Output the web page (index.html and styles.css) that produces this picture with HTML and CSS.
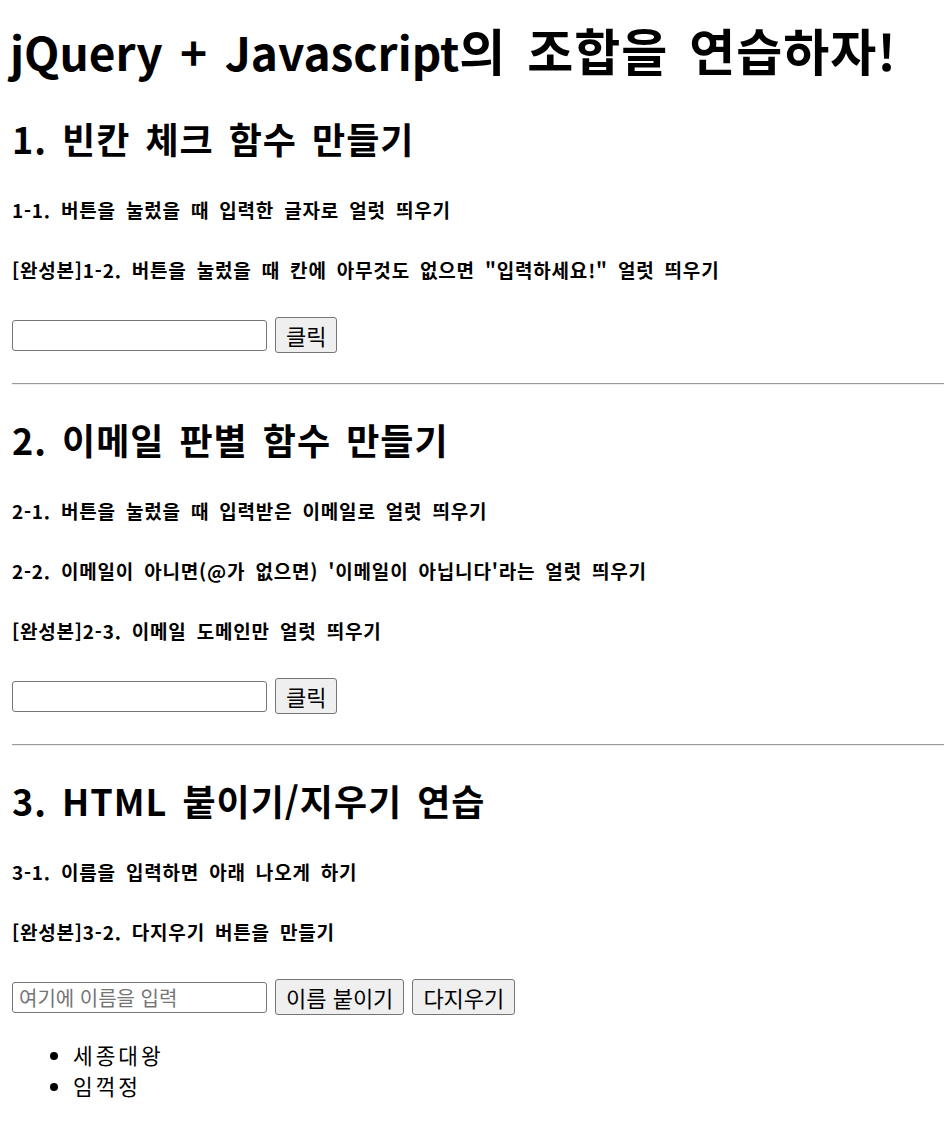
FILE: index.html
```html
<!DOCTYPE html>
<html lang="ko">
<head>
<meta charset="utf-8">
<title>jQuery + Javascript</title>
<link rel="stylesheet" href="styles.css">
</head>
<body>
<h1 class="title"><span class="en" lang="en">jQuery + Javascript</span>의 조합을 연습하자!</h1>

<section class="part">
  <h2 class="part-title">1. 빈칸 체크 함수 만들기</h2>
  <h4 class="task">1-1. 버튼을 눌렀을 때 입력한 글자로 얼럿 띄우기</h4>
  <h4 class="task">[완성본]1-2. 버튼을 눌렀을 때 칸에 아무것도 없으면 "입력하세요!" 얼럿 띄우기</h4>
  <div class="row">
    <input class="field" type="text">
    <button class="btn">클릭</button>
  </div>
</section>
<hr class="divider">

<section class="part">
  <h2 class="part-title">2. 이메일 판별 함수 만들기</h2>
  <h4 class="task">2-1. 버튼을 눌렀을 때 입력받은 이메일로 얼럿 띄우기</h4>
  <h4 class="task">2-2. 이메일이 아니면(@가 없으면) '이메일이 아닙니다'라는 얼럿 띄우기</h4>
  <h4 class="task">[완성본]2-3. 이메일 도메인만 얼럿 띄우기</h4>
  <div class="row">
    <input class="field" type="text">
    <button class="btn">클릭</button>
  </div>
</section>
<hr class="divider">

<section class="part">
  <h2 class="part-title">3. HTML 붙이기/지우기 연습</h2>
  <h4 class="task">3-1. 이름을 입력하면 아래 나오게 하기</h4>
  <h4 class="task">[완성본]3-2. 다지우기 버튼을 만들기</h4>
  <div class="row">
    <input class="field" type="text" placeholder="여기에 이름을 입력">
    <button class="btn">이름 붙이기</button>
    <button class="btn">다지우기</button>
  </div>
  <ul class="names">
    <li>세종대왕</li>
    <li>임꺽정</li>
  </ul>
</section>
</body>
</html>
```

FILE: styles.css
```css
html, body {
  background: #ffffff;
}
body {
  margin: 0;
  padding: 0 0 0 12px;
  color: #000000;
  font-family: "Noto Sans CJK KR", "Noto Sans", sans-serif;
}
.title {
  margin: 19px 0 0 -2px;
  font-size: 50px;
  line-height: 60px;
  font-weight: 700;
  word-spacing: 6px;
  letter-spacing: 1px;
}
.title .en {
  font-size: 46px;
  word-spacing: 7px;
  letter-spacing: 0;
}
.part-title {
  margin: 29px 0 0 0;
  font-size: 36px;
  line-height: 50px;
  font-weight: 700;
  word-spacing: 4px;
  letter-spacing: 1px;
}
.part:first-of-type .part-title {
  margin-top: 32px;
}
.task {
  margin: 36px 0 0 0;
  font-size: 19px;
  line-height: 24px;
  font-weight: 700;
  word-spacing: 4px;
  letter-spacing: 0.8px;
}
.part-title + .task {
  margin-top: 35px;
}
.row {
  display: flex;
  align-items: center;
  gap: 8px;
  margin-top: 35px;
  height: 36px;
}
.field {
  box-sizing: border-box;
  width: 255px;
  height: 31px;
  margin: 0;
  padding: 1px 6px;
  border: 1px solid #767676;
  border-radius: 3px;
  background: #ffffff;
  font-family: inherit;
  font-size: 20px;
}
.field::placeholder {
  color: #757575;
}
.btn {
  box-sizing: border-box;
  height: 36px;
  margin: 0;
  padding: 0 10px;
  border: 1px solid #767676;
  border-radius: 3px;
  background: #efefef;
  color: #000000;
  font-family: inherit;
  font-size: 22px;
}
.divider {
  margin: 30px 0 0 0;
  height: 0;
  border: 0;
  border-top: 1px solid #9a9a9a;
  border-bottom: 1px solid #eeeeee;
}
.names {
  margin: 24px 0 0 0;
  padding-left: 61px;
  font-size: 21.4px;
  line-height: 31px;
  letter-spacing: 3px;
}
```
